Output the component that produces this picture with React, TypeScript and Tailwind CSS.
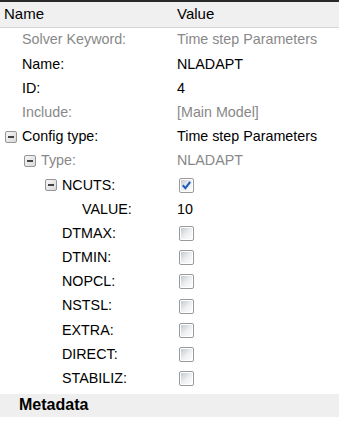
import React from "react";

const font = { fontFamily: '"Liberation Sans", Arial, sans-serif' };

function Minus() {
  return (
    <span className="inline-flex w-[12px] h-[12px] border border-[#959595] rounded-[2px] bg-gradient-to-br from-[#f6f6f6] to-[#dadada] items-center justify-center shrink-0">
      <span className="block w-[6px] h-[2px] bg-[#444]" />
    </span>
  );
}

function Check({ checked }: { checked?: boolean }) {
  return (
    <span className="relative inline-flex w-[15px] h-[15px] border border-[#9a9a9a] rounded-[2px] bg-white p-[1px]">
      <span className="block w-full h-full bg-gradient-to-br from-[#c4c8ce] via-[#eceef1] to-[#ffffff]" />
      {checked && (
        <svg viewBox="0 0 14 14" className="absolute left-[0px] top-[0px] w-[13px] h-[13px]">
          <path d="M3 6.8 L5.8 9.8 L11 3" fill="none" stroke="#1d5db5" strokeWidth="2.2" />
        </svg>
      )}
    </span>
  );
}

type Row = {
  label: string;
  indent: number;
  value?: string;
  check?: "on" | "off";
  gray?: boolean;
  minus?: boolean;
};

const rows: Row[] = [
  { label: "Solver Keyword:", indent: 22, value: "Time step Parameters", gray: true },
  { label: "Name:", indent: 22, value: "NLADAPT" },
  { label: "ID:", indent: 22, value: "4" },
  { label: "Include:", indent: 22, value: "[Main Model]", gray: true },
  { label: "Config type:", indent: 5, value: "Time step Parameters", minus: true },
  { label: "Type:", indent: 24, value: "NLADAPT", gray: true, minus: true },
  { label: "NCUTS:", indent: 45, check: "on", minus: true },
  { label: "VALUE:", indent: 82, value: "10" },
  { label: "DTMAX:", indent: 62, check: "off" },
  { label: "DTMIN:", indent: 62, check: "off" },
  { label: "NOPCL:", indent: 62, check: "off" },
  { label: "NSTSL:", indent: 62, check: "off" },
  { label: "EXTRA:", indent: 62, check: "off" },
  { label: "DIRECT:", indent: 62, check: "off" },
  { label: "STABILIZ:", indent: 62, check: "off" },
];

export default function App() {
  return (
    <div className="w-[339px] h-[424px] bg-white overflow-hidden text-[14.3px] text-black" style={font}>
      <div className="h-[28px] border-t-2 border-[#2a2a2a] border-b border-b-[#d6d6d6] bg-[#f0f0f0] flex items-center text-[15px] text-black">
        <div className="w-[177px] pl-[4px]">Name</div>
        <div>Value</div>
      </div>
      {rows.map((r) => (
        <div key={r.label} className="h-[24.2px] flex items-center">
          <div className="w-[177px] flex items-center" style={{ paddingLeft: r.indent }}>
            {r.minus && (
              <span className="mr-[5px] flex">
                <Minus />
              </span>
            )}
            <span className={r.gray ? "text-[#888888]" : "text-black"}>{r.label}</span>
          </div>
          <div className="flex items-center">
            {r.check ? (
              <span className="ml-[2px] flex">
                <Check checked={r.check === "on"} />
              </span>
            ) : (
              <span className={r.gray ? "text-[#888888]" : "text-black"}>{r.value}</span>
            )}
          </div>
        </div>
      ))}
      <div className="mt-[3px] h-[23px] bg-[#efefef] flex items-center pl-[19px] font-bold text-[16px] text-black">
        Metadata
      </div>
    </div>
  );
}
